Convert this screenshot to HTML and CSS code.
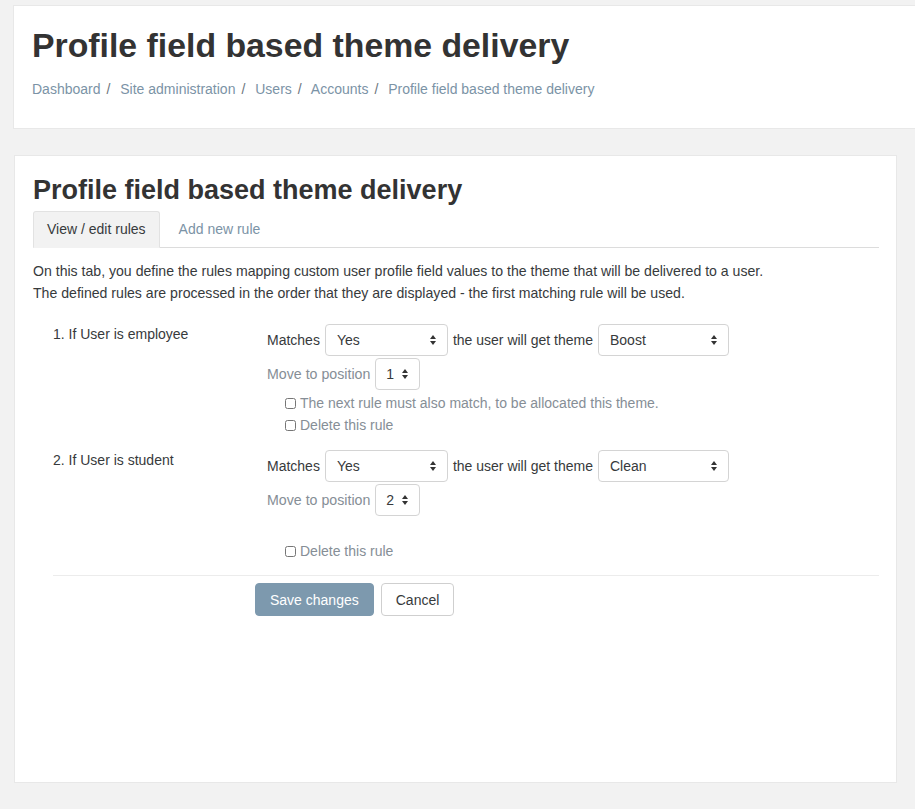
FILE: index.html
```html
<!DOCTYPE html>
<html lang="en">
<head>
  <meta charset="UTF-8" />
  <title>Profile field based theme delivery</title>
  <link rel="stylesheet" href="styles.css">
</head>
<body>
  <header class="page-header">
    <h1>Profile field based theme delivery</h1>
    <nav class="breadcrumb">
      <a href="#">Dashboard</a><span class="sep">/</span>
      <a href="#">Site administration</a><span class="sep">/</span>
      <a href="#">Users</a><span class="sep">/</span>
      <a href="#">Accounts</a><span class="sep">/</span>
      <a href="#">Profile field based theme delivery</a>
    </nav>
  </header>

  <main class="card">
    <h2>Profile field based theme delivery</h2>

    <ul class="tabs">
      <li class="tab active">View / edit rules</li>
      <li class="tab"><a href="#">Add new rule</a></li>
    </ul>

    <p class="intro">
      On this tab, you define the rules mapping custom user profile field values to the theme that will be delivered to a user.<br>
      The defined rules are processed in the order that they are displayed - the first matching rule will be used.
    </p>

    <form class="rules">
      <div class="rule">
        <div class="rule-label">1. If User is employee</div>
        <div class="rule-fields">
          <div class="field-row">
            <span>Matches</span>
            <div class="select w-match">Yes <span class="caret"></span></div>
            <span>the user will get theme</span>
            <div class="select w-theme">Boost <span class="caret"></span></div>
          </div>
          <div class="field-row muted">
            <span>Move to position</span>
            <div class="select w-pos">1 <span class="caret"></span></div>
          </div>
          <label class="check"><input type="checkbox"> The next rule must also match, to be allocated this theme.</label>
          <label class="check"><input type="checkbox"> Delete this rule</label>
        </div>
      </div>

      <div class="rule">
        <div class="rule-label">2. If User is student</div>
        <div class="rule-fields">
          <div class="field-row">
            <span>Matches</span>
            <div class="select w-match">Yes <span class="caret"></span></div>
            <span>the user will get theme</span>
            <div class="select w-theme">Clean <span class="caret"></span></div>
          </div>
          <div class="field-row muted">
            <span>Move to position</span>
            <div class="select w-pos">2 <span class="caret"></span></div>
          </div>
          <div class="check blank"></div>
          <label class="check"><input type="checkbox"> Delete this rule</label>
        </div>
      </div>

      <div class="actions">
        <button type="button" class="btn btn-primary">Save changes</button>
        <button type="button" class="btn btn-default">Cancel</button>
      </div>
    </form>
  </main>
</body>
</html>
```

FILE: styles.css
```css
:root {
  --page-bg: #f2f2f2;
  --white: #ffffff;
  --text: #373a3c;
  --link: #7b93a6;
  --muted: #868e96;
  --border: #dcdcdc;
}

body {
  margin: 0;
  padding: 5px 0 26px 13px;
  background-color: var(--page-bg);
  font-family: "Liberation Sans", Arial, sans-serif;
  font-size: 14px;
  color: var(--text);
  overflow: hidden;
}

a {
  color: var(--link);
  text-decoration: none;
}

.page-header {
  background-color: var(--white);
  border: 1px solid #e8e8e8;
  border-right: none;
  padding: 18px 18px 30px;
  height: 74px;
}

h1 {
  margin: 0;
  font-size: 33.8px;
  font-weight: bold;
  color: #333;
  line-height: 42px;
}

.breadcrumb {
  margin-top: 15px;
  font-size: 14px;
  color: var(--link);
}

.breadcrumb .sep {
  color: #6c757d;
  margin: 0 6px;
}

.card {
  margin: 26px 18px 0 1px;
  background-color: var(--white);
  border: 1px solid #e8e8e8;
  padding: 16px 17px 0 18px;
  height: 610px;
}

h2 {
  margin: 0;
  font-size: 27px;
  font-weight: bold;
  color: #333;
  line-height: 36px;
}

.tabs {
  list-style: none;
  margin: 3px 0 0;
  padding: 0;
  display: flex;
  border-bottom: 1px solid var(--border);
}

.tab {
  padding: 0 13px;
  height: 35px;
  line-height: 35px;
  font-size: 14px;
  margin-bottom: -1px;
  border: 1px solid transparent;
  border-radius: 3px 3px 0 0;
}

.tab + .tab {
  margin-left: 5px;
}

.tab.active {
  background-color: #f2f2f2;
  border-color: #e2e2e2 #e2e2e2 #f2f2f2;
}

.intro {
  margin: 12px 0 0;
  line-height: 22px;
  font-size: 14.1px;
}

.rules {
  margin-top: 20px;
}

.rule {
  display: flex;
  margin-bottom: 14px;
}

.rule-label {
  width: 214px;
  padding-left: 20px;
  padding-top: 2px;
  flex-shrink: 0;
  line-height: 17px;
}

.field-row {
  display: flex;
  align-items: center;
  gap: 5px;
  margin-bottom: 2px;
}

.field-row.muted {
  color: var(--muted);
  font-size: 14.2px;
}

.select {
  height: 30px;
  border: 1px solid #d4d4d4;
  border-radius: 4px;
  background-color: var(--white);
  display: flex;
  align-items: center;
  justify-content: space-between;
  padding: 0 10px 0 11px;
  color: var(--text);
  font-size: 14px;
  box-sizing: content-box;
}

.w-match { width: 100px; }
.w-theme { width: 108px; }
.w-pos { width: 23px; padding: 0 10px 0 10px; }

.caret {
  width: 7px;
  height: 10px;
  position: relative;
}

.caret::before,
.caret::after {
  content: "";
  position: absolute;
  left: 0;
  border-left: 3.5px solid transparent;
  border-right: 3.5px solid transparent;
}

.caret::before {
  top: 0;
  border-bottom: 4px solid #333;
}

.caret::after {
  bottom: 0;
  border-top: 4px solid #333;
}

.check {
  display: flex;
  align-items: center;
  height: 22px;
  margin-left: 18px;
  color: var(--muted);
}

.check input {
  margin: 0 4px 0 0;
  width: 11px;
  height: 11px;
}

.actions {
  margin-left: 20px;
  margin-top: -1px;
  border-top: 1px solid #ececec;
  padding: 7px 0 0 202px;
  display: flex;
  gap: 7px;
}

.btn {
  height: 33px;
  padding: 0 14px;
  font-family: inherit;
  font-size: 14px;
  border-radius: 4px;
  cursor: pointer;
}

.btn-primary {
  background-color: #7d99ae;
  border: 1px solid #7d99ae;
  color: var(--white);
}

.btn-default {
  background-color: var(--white);
  border: 1px solid #cfcfcf;
  color: var(--text);
}
```
